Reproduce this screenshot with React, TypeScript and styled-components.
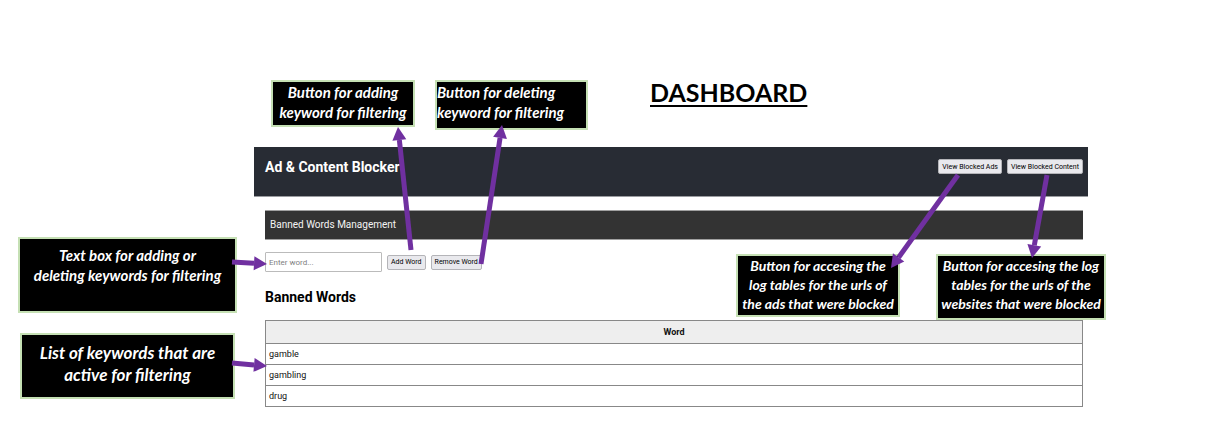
import React from 'react';
import styled, { createGlobalStyle } from 'styled-components';

const GlobalStyle = createGlobalStyle`
  * { box-sizing: border-box; }
  body {
    margin: 0;
    background: #fff;
    color: #111;
    font-family: Roboto, "Noto Sans", sans-serif;
  }
`;

const Page = styled.main`
  position: relative;
  display: grid;
  grid-template-columns: 254px minmax(0, 1fr) 134px;
`;

const TopRow = styled.header`
  grid-column: 1 / -1;
  display: flex;
  align-items: flex-start;
  gap: 20px;
  min-height: 147px;
  padding: 80px 0 16px 271px;
`;

const Title = styled.h1`
  margin: 0 0 0 42px;
  color: #000;
  font: bold 25px/24px Lato, sans-serif;
  text-decoration: underline;
  text-decoration-thickness: 2px;
  text-underline-offset: 3px;
`;

const noteFonts = {
  small: '14px/19px',
  medium: '15px/20px',
  large: '17px/22px',
};

const Note = styled.p<{ $w: number; $h: number; $size?: keyof typeof noteFonts; $left?: boolean; $pad?: number }>`
  flex: none;
  width: ${p => p.$w}px;
  min-height: ${p => p.$h}px;
  margin: 0;
  padding-top: ${p => p.$pad ?? 0}px;
  border: 2px solid #c5e0b4;
  background: #000;
  color: #fff;
  font: italic bold ${p => noteFonts[p.$size ?? 'medium']} Lato, sans-serif;
  text-align: ${p => (p.$left ? 'left' : 'center')};
  white-space: pre-line;
`;

const SideNotes = styled.aside`
  display: flex;
  flex-direction: column;
  align-items: center;
  gap: 20px;
  padding: 90px 17px 0 18px;
`;

const RightNotes = styled.aside`
  position: absolute;
  top: 254px;
  right: 116px;
  display: flex;
  align-items: flex-start;
  gap: 36px;
`;

const AppPanel = styled.section`
  min-width: 0;
`;

const AppHeader = styled.div`
  display: flex;
  justify-content: space-between;
  align-items: flex-start;
  height: 50px;
  padding: 8px 5px 0 11px;
  border-bottom: 1px solid #9a9ca0;
  background: #282c34;
`;

const AppName = styled.h2`
  margin: 0;
  color: #fff;
  font-size: 14px;
  line-height: 24px;
`;

const ButtonGroup = styled.div`
  display: flex;
  gap: 5px;
  padding-top: 4px;
`;

const Button = styled.button`
  height: 15px;
  padding: 0 3px;
  border: 1px solid #b4b4b8;
  border-radius: 2px;
  background: #e9e9ed;
  color: #000;
  font: 7px/12px Roboto, "Noto Sans", sans-serif;
  white-space: nowrap;
`;

const Body = styled.div`
  padding: 13px 5px 0 11px;
`;

const SectionBar = styled.h3`
  margin: 0;
  padding: 0 5px;
  border: solid #a0a0a0;
  border-width: 1px 0;
  background: #333;
  color: #f4f4f4;
  font-size: 10px;
  font-weight: 400;
  line-height: 28px;
`;

const Form = styled.form`
  display: flex;
  align-items: center;
  gap: 5px;
  margin-top: 12px;
`;

const WordInput = styled.input`
  width: 117px;
  height: 20px;
  padding: 0 3px;
  border: 1px solid #bbb;
  border-radius: 1px;
  background: #fff;
  font: 8px Roboto, "Noto Sans", sans-serif;
  &::placeholder { color: #808080; opacity: 1; }
`;

const Subheading = styled.h2`
  margin: 13px 0 11px;
  color: #000;
  font-size: 14px;
  line-height: 24px;
`;

const WordTable = styled.table`
  width: 100%;
  border-collapse: collapse;
  font-size: 9px;
  line-height: 20px;
  th, td {
    padding: 0 3px;
    border: 1px solid #888;
  }
  th { height: 23px; background: #eee; text-align: center; }
  td { text-align: left; }
`;

const Arrows = styled.svg<{ $side: 'left' | 'right' }>`
  position: absolute;
  top: 0;
  ${p => p.$side}: 0;
  width: 611px;
  height: 426px;
  pointer-events: none;
`;

type ArrowProps = { from: [number, number]; to: [number, number] };

function Arrow({ from, to }: ArrowProps) {
  const dx = to[0] - from[0];
  const dy = to[1] - from[1];
  const length = Math.hypot(dx, dy);
  const ux = dx / length;
  const uy = dy / length;
  const bx = to[0] - ux * 13;
  const by = to[1] - uy * 13;
  const head = [
    [to[0], to[1]],
    [bx - uy * 7, by + ux * 7],
    [bx + uy * 7, by - ux * 7],
  ];
  return (
    <g fill="#7030a0" stroke="none">
      <line x1={from[0]} y1={from[1]} x2={bx} y2={by} stroke="#7030a0" strokeWidth="5" />
      <polygon points={head.map(point => point.join(',')).join(' ')} />
    </g>
  );
}

const words = ['gamble', 'gambling', 'drug'];

export default function App() {
  return (
    <>
      <GlobalStyle />
      <Page>
        <TopRow>
          <Note $w={144} $h={47}>{'Button for adding\nkeyword for filtering'}</Note>
          <Note $w={153} $h={50} $left>{'Button for deleting\nkeyword for filtering'}</Note>
          <Title>DASHBOARD</Title>
        </TopRow>
        <SideNotes>
          <Note $w={219} $h={76} $pad={6}>{'Text box for adding or\ndeleting keywords for filtering'}</Note>
          <Note $w={215} $h={66} $pad={7} $size="large">{'List of keywords that are\nactive for filtering'}</Note>
        </SideNotes>
        <AppPanel>
          <AppHeader>
            <AppName>Ad &amp; Content Blocker</AppName>
            <ButtonGroup>
              <Button type="button">View Blocked Ads</Button>
              <Button type="button">View Blocked Content</Button>
            </ButtonGroup>
          </AppHeader>
          <Body>
            <SectionBar>Banned Words Management</SectionBar>
            <Form onSubmit={event => event.preventDefault()}>
              <WordInput type="text" placeholder="Enter word..." aria-label="Enter word" />
              <Button type="submit">Add Word</Button>
              <Button type="button">Remove Word</Button>
            </Form>
            <Subheading>Banned Words</Subheading>
            <WordTable>
              <thead>
                <tr><th scope="col">Word</th></tr>
              </thead>
              <tbody>
                {words.map(word => <tr key={word}><td>{word}</td></tr>)}
              </tbody>
            </WordTable>
          </Body>
        </AppPanel>
        <RightNotes>
          <Note $w={164} $h={63} $size="small">{'Button for accesing the\nlog tables for the urls of\nthe ads that were blocked'}</Note>
          <Note $w={170} $h={66} $size="small">{'Button for accesing the log\ntables for the urls of the\nwebsites that were blocked'}</Note>
        </RightNotes>
        <Arrows $side="left" viewBox="0 0 611 426" aria-hidden="true">
          <Arrow from={[411, 250]} to={[398, 127]} />
          <Arrow from={[481, 264]} to={[502, 125]} />
          <Arrow from={[232, 262]} to={[267, 264]} />
          <Arrow from={[232, 363]} to={[267, 366]} />
        </Arrows>
        <Arrows $side="right" viewBox="611 0 611 426" aria-hidden="true">
          <Arrow from={[958, 175]} to={[891, 268]} />
          <Arrow from={[1047, 175]} to={[1032, 258]} />
        </Arrows>
      </Page>
    </>
  );
}
